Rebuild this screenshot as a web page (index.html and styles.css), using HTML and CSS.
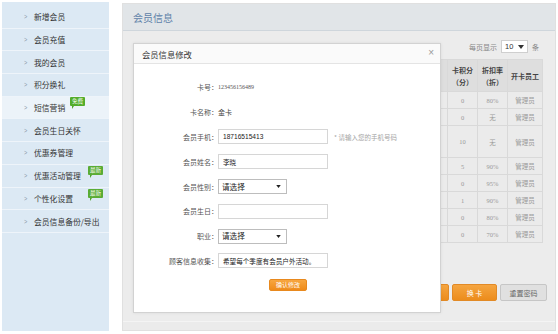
FILE: index.html
```html
<!DOCTYPE html>
<html lang="zh-CN">
<head>
<meta charset="utf-8">
<title>会员信息</title>
<link rel="stylesheet" href="styles.css">
</head>
<body>
<div class="page">
  <nav class="sidebar">
    <a class="nav-item"><span class="arrow">&gt;</span>新增会员</a>
    <a class="nav-item"><span class="arrow">&gt;</span>会员充值</a>
    <a class="nav-item"><span class="arrow">&gt;</span>我的会员</a>
    <a class="nav-item"><span class="arrow">&gt;</span>积分换礼</a>
    <a class="nav-item active"><span class="arrow">&gt;</span>短信营销<span class="badge badge-free">免费</span></a>
    <a class="nav-item"><span class="arrow">&gt;</span>会员生日关怀</a>
    <a class="nav-item"><span class="arrow">&gt;</span>优惠券管理</a>
    <a class="nav-item"><span class="arrow">&gt;</span>优惠活动管理<span class="badge badge-new">最新</span></a>
    <a class="nav-item"><span class="arrow">&gt;</span>个性化设置<span class="badge badge-new">最新</span></a>
    <a class="nav-item"><span class="arrow">&gt;</span>会员信息备份/导出</a>
  </nav>

  <section class="main">
    <header class="main-header">会员信息</header>
    <div class="main-body">
      <div class="toolbar">
        <span>每页显示</span>
        <span class="page-select">10<svg width="6" height="4" viewBox="0 0 6 4"><path d="M0 0h6L3 4z" fill="#333"/></svg></span>
        <span>条</span>
      </div>
      <table class="grid">
        <colgroup>
          <col class="c-wide"><col class="c-pts"><col class="c-pts"><col class="c-staff">
        </colgroup>
        <thead>
          <tr><th></th><th>卡积分<br>（分）</th><th>折扣率<br>（折）</th><th>开卡员工</th></tr>
        </thead>
        <tbody>
          <tr><td></td><td>0</td><td>80%</td><td>管理员</td></tr>
          <tr><td></td><td>0</td><td>无</td><td>管理员</td></tr>
          <tr class="tall"><td></td><td>10</td><td>无</td><td>管理员</td></tr>
          <tr><td></td><td>5</td><td>90%</td><td>管理员</td></tr>
          <tr><td></td><td>0</td><td>95%</td><td>管理员</td></tr>
          <tr><td></td><td>1</td><td>90%</td><td>管理员</td></tr>
          <tr><td></td><td>0</td><td>80%</td><td>管理员</td></tr>
          <tr><td></td><td>0</td><td>70%</td><td>管理员</td></tr>
        </tbody>
      </table>
      <div class="actions">
        <button class="btn btn-orange"></button>
        <button class="btn btn-orange">换 卡</button>
        <button class="btn btn-gray">重置密码</button>
      </div>

      <div class="modal">
        <div class="modal-title">会员信息修改<span class="close">×</span></div>
        <div class="form">
          <div class="label">卡号：</div><div class="value"><span class="num">123456156489</span></div>
          <div class="label">卡名称：</div><div class="value">金卡</div>
          <div class="label">会员手机：</div><div class="value"><input class="field" value="18716515413"><span class="hint">* 请输入您的手机号码</span></div>
          <div class="label">会员姓名：</div><div class="value"><input class="field" value="李晓"></div>
          <div class="label">会员性别：</div><div class="value"><span class="dropdown"><span>请选择</span><svg width="5" height="3" viewBox="0 0 6 4"><path d="M0 0h6L3 4z" fill="#222"/></svg></span></div>
          <div class="label">会员生日：</div><div class="value"><input class="field" value=""></div>
          <div class="label">职业：</div><div class="value"><span class="dropdown"><span>请选择</span><svg width="5" height="3" viewBox="0 0 6 4"><path d="M0 0h6L3 4z" fill="#222"/></svg></span></div>
          <div class="label">顾客信息收集：</div><div class="value"><input class="field" value="希望每个季度有会员户外活动。"></div>
          <div class="label"></div><div class="value"><button class="btn-confirm">确认修改</button></div>
        </div>
      </div>
    </div>
  </section>
</div>
</body>
</html>
```

FILE: styles.css
```css
* { box-sizing: border-box; }
html, body { margin: 0; padding: 0; background: #fff; }
body {
  font-family: "Noto Sans CJK SC", "Liberation Sans", sans-serif;
  color: #333;
}
.page {
  display: flex;
  padding: 2px 3px 3px 2px;
  height: 334px;
}

/* Sidebar */
.sidebar {
  width: 107px;
  background: #dce9f4;
  padding-top: 4px;
  display: flex;
  flex-direction: column;
  flex-shrink: 0;
}
.nav-item {
  position: relative;
  display: flex;
  align-items: center;
  height: 22.7px;
  border-bottom: 1px solid #eef4fa;
  padding-left: 21px;
  font-size: 7.8px;
  color: #333;
  white-space: nowrap;
}
.nav-item.active { background: #ecf3f9; }
.arrow {
  font-family: "Liberation Sans", sans-serif;
  color: #8a9aa8;
  font-size: 7px;
  width: 11px;
  transform: scaleX(0.8);
}
.badge {
  position: absolute;
  font-size: 5.6px;
  line-height: 9px;
  height: 9px;
  padding: 0 2px;
  color: #fff;
  border-radius: 1px;
}
.badge::after {
  content: "";
  position: absolute;
  left: 2px;
  bottom: -3px;
  border-left: 2px solid #4fa52a;
  border-right: 2px solid transparent;
  border-bottom: 3px solid transparent;
}
.badge-free { background: #53ad2b; left: 68px; top: 0px; }
.badge-new { background: #5aac34; left: 86px; top: 1px; }

/* Main */
.main {
  margin-left: 13px;
  margin-top: 1px;
  flex: 1;
  background: #ebebeb;
  border: 1px solid #e0e0e0;
  display: flex;
  flex-direction: column;
}
.main-header {
  height: 27px;
  background: #e1e5e8;
  border-bottom: 1px solid #cfd6dc;
  padding-left: 10px;
  display: flex;
  align-items: center;
  font-size: 10px;
  color: #5f82a8;
}
.main-body {
  position: relative;
  flex: 1;
  padding: 7px 12px 0 10px;
  border-bottom: 1px solid #f4f4f4;
  margin-bottom: 8px;
  background: #ececec;
}
.toolbar {
  height: 17px;
  display: flex;
  justify-content: flex-end;
  align-items: center;
  gap: 4px;
  font-size: 7px;
  color: #888;
  padding-right: 4px;
}
.page-select {
  display: inline-flex;
  align-items: center;
  justify-content: space-between;
  width: 27px;
  height: 13px;
  padding: 0 3px;
  background: #fff;
  border: 1px solid #cfcfcf;
  font-family: "Liberation Sans", sans-serif;
  color: #333;
  font-size: 7.5px;
}

/* Table */
.grid {
  margin-top: 4px;
  width: 409px;
  border-collapse: collapse;
  table-layout: fixed;
}
.c-wide { width: 314px; }
.c-pts { width: 30px; }
.c-staff { width: 35px; }
.grid th, .grid td {
  border: 1px solid #d9d9d9;
  text-align: center;
  padding: 0;
  overflow: hidden;
  white-space: nowrap;
}
.grid th {
  height: 32px;
  background: #dedede;
  font-family: "Noto Sans CJK SC", "Liberation Serif", serif;
  font-weight: bold;
  font-size: 7px;
  line-height: 12px;
  color: #444;
}
.grid td {
  height: 17px;
  background: #ebebeb;
  font-family: "Liberation Serif", "Noto Sans CJK SC", serif;
  font-size: 6.5px;
  color: #9a9a9a;
}
.grid tr.tall td { height: 32px; }

.actions {
  margin-top: 41px;
  display: flex;
  justify-content: flex-end;
  gap: 3px;
  margin-right: -4px;
}
.btn {
  height: 17px;
  border-radius: 2px;
  font-family: "Noto Sans CJK SC", sans-serif;
  font-size: 7px;
  padding: 0;
}
.btn-orange {
  width: 45px;
  background: linear-gradient(#f5a540, #ec8c1c);
  border: 1px solid #e28a26;
  color: #fff;
}
.btn-gray {
  width: 47px;
  background: #e0e0e0;
  border: 1px solid #c6c6c6;
  color: #666;
}

/* Modal */
.modal {
  position: absolute;
  left: 10px;
  top: 12px;
  width: 308px;
  height: 270px;
  background: #fff;
  border: 1px solid #d2d2d2;
  box-shadow: 0 0 3px rgba(0,0,0,0.08);
}
.modal-title {
  position: relative;
  height: 20px;
  border-bottom: 1px solid #e4e4e4;
  background: #fafafa;
  padding-left: 8px;
  display: flex;
  align-items: center;
  font-size: 8.3px;
  color: #333;
}
.close {
  position: absolute;
  right: 6px;
  top: 4px;
  font-family: "Liberation Sans", sans-serif;
  font-size: 10px;
  color: #999;
  line-height: 10px;
}
.form {
  display: grid;
  grid-template-columns: 84px 1fr;
  grid-auto-rows: 24.8px;
  padding-top: 11px;
}
.label {
  font-size: 7px;
  color: #555;
  display: flex;
  align-items: center;
  justify-content: flex-end;
  white-space: nowrap;
}
.value {
  display: flex;
  align-items: center;
  font-size: 7px;
  color: #444;
  white-space: nowrap;
}
.num {
  font-family: "Liberation Serif", serif;
  font-size: 6px;
  color: #555;
}
.field {
  width: 110px;
  height: 15px;
  border: 1px solid #d6d6d6;
  padding: 0 0 0 4px;
  font-family: "Liberation Sans", "Noto Sans CJK SC", sans-serif;
  font-size: 6.6px;
  color: #222;
  outline: none;
  margin: 0;
}
.hint {
  margin-left: 6px;
  font-size: 6.5px;
  color: #a5a5a5;
}
.dropdown {
  display: inline-flex;
  align-items: center;
  justify-content: space-between;
  width: 69px;
  height: 15px;
  padding: 0 5px 0 3px;
  border: 1px solid #bdbdbd;
  background: #fff;
  font-size: 7.6px;
  line-height: 10px;
  color: #222;
}
.btn-confirm {
  margin-left: 51px;
  margin-top: -2px;
  width: 38px;
  height: 12px;
  padding: 0;
  border: 1px solid #e8891e;
  border-radius: 2px;
  background: linear-gradient(#f7a640, #ef8b1a);
  color: #fff;
  font-family: "Noto Sans CJK SC", sans-serif;
  font-size: 6px;
}
```
